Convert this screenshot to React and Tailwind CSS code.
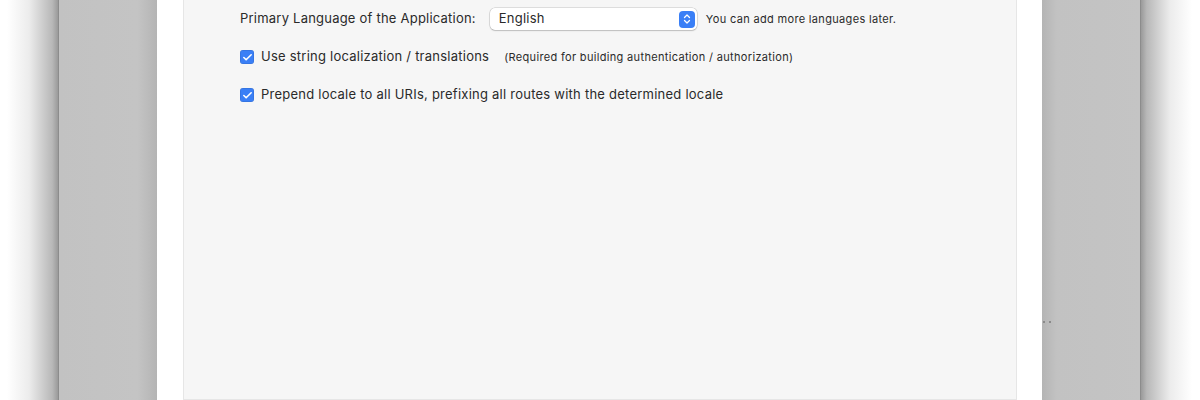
import { Check, ChevronsUpDown } from "lucide-react";

function CheckRow({ label, note }) {
  return (
    <label className="flex items-center h-[14px]">
      <span className="w-[14px] h-[14px] rounded-[3px] bg-[#3a7ff6] flex items-center justify-center shadow-[inset_0_0_0_0.5px_rgba(0,0,0,0.15)]">
        <Check size={11} strokeWidth={3.5} className="text-white" />
      </span>
      <span className="ml-[7px] text-[13px] tracking-[0.24px] text-[#2a2a2a]">{label}</span>
      {note && <span className="ml-[15px] text-[11px] tracking-[0.33px] text-[#2a2a2a]">{note}</span>}
    </label>
  );
}

export default function App() {
  return (
    <div className="flex w-[1200px] h-[400px] overflow-hidden bg-white font-['Inter',sans-serif]">
      <div className="w-[58px] shrink-0 bg-[linear-gradient(to_right,#ffffff_12%,#ececec_50%,#b8b8b8_90%,#9a9a9a)]" />
      <div className="w-[99px] shrink-0 border-l border-[#8c8c8c] bg-[linear-gradient(to_right,#c2c2c2,#c4c4c4_80%,#b4b4b4)]" />
      <div className="w-[26px] shrink-0 bg-white" />

      <div className="w-[834px] shrink-0 bg-[#f6f6f6] border-x border-b border-[#e6e6e6] pl-[56px] pt-[8px]">
        <div className="flex items-center h-[22px]">
          <span className="text-[13px] tracking-[0.22px] text-[#2a2a2a]">Primary Language of the Application:</span>
          <div className="ml-[14px] w-[207px] h-[22px] bg-white rounded-[5px] shadow-[0_0_0_0.5px_rgba(0,0,0,0.2),0_1px_1.5px_rgba(0,0,0,0.15)] flex items-center pl-[9px] pr-[2px]">
            <span className="flex-1 text-[13px] tracking-[0.22px] text-[#2a2a2a]">English</span>
            <span className="w-[16px] h-[17px] rounded-[4px] bg-[#3a7ff6] flex items-center justify-center">
              <ChevronsUpDown size={12} strokeWidth={2.5} className="text-white" />
            </span>
          </div>
          <span className="ml-[9px] text-[11px] tracking-[0.33px] text-[#2a2a2a]">You can add more languages later.</span>
        </div>

        <div className="mt-[20px]">
          <CheckRow
            label="Use string localization / translations"
            note="(Required for building authentication / authorization)"
          />
        </div>
        <div className="mt-[24px]">
          <CheckRow label="Prepend locale to all URIs, prefixing all routes with the determined locale" />
        </div>
      </div>

      <div className="w-[25px] shrink-0 bg-white" />
      <div className="relative w-[99px] shrink-0 border-r border-[#8c8c8c] bg-[linear-gradient(to_right,#b4b4b4,#c2c2c2_15%,#c4c4c4)]">
        <div className="absolute left-[1px] top-[321px] flex gap-[4px]">
          <span className="w-[2px] h-[2px] bg-[#8a8a8a]" />
          <span className="w-[2px] h-[2px] bg-[#8a8a8a]" />
        </div>
      </div>
      <div className="w-[58px] shrink-0 bg-[linear-gradient(to_left,#ffffff_12%,#ececec_50%,#b8b8b8_90%,#9a9a9a)]" />
    </div>
  );
}
